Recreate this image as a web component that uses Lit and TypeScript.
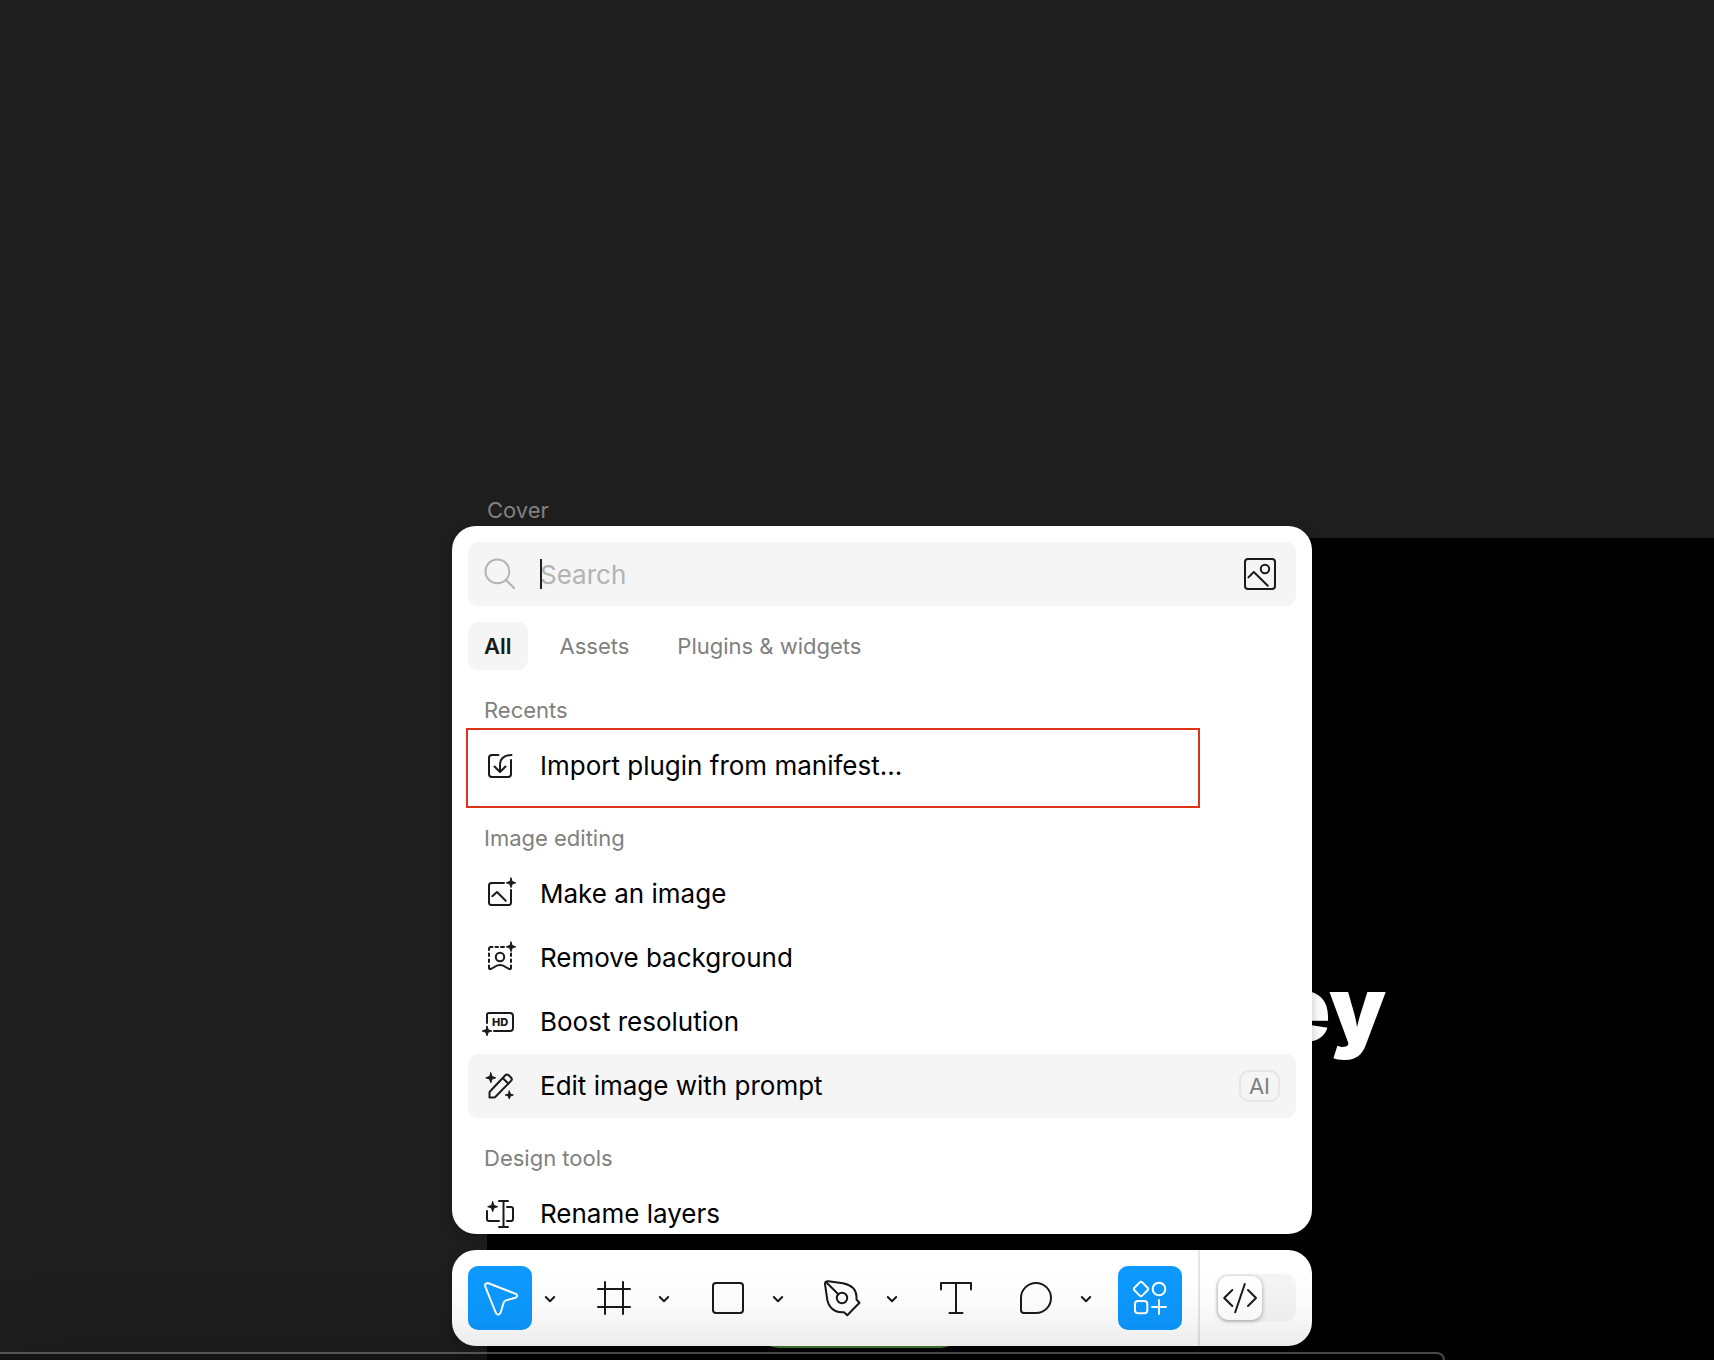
import { LitElement, html, css, svg, nothing, TemplateResult, SVGTemplateResult } from "lit";
import { customElement, property, state } from "lit/decorators.js";
import { classMap } from "lit/directives/class-map.js";

const spark = (x: number, y: number, r: number): SVGTemplateResult => {
  const k = r / 4;
  return svg`<path class="solid" d="M${x} ${y - r}L${x + k} ${y - k}L${x + r} ${y}L${x + k} ${y + k}L${x} ${y + r}L${x - k} ${y + k}L${x - r} ${y}L${x - k} ${y - k}Z"/>`;
};

const icons: Record<string, { size: number; art: SVGTemplateResult }> = {
  search: { size: 32, art: svg`<circle cx="13.4" cy="13.4" r="11.9"/><path d="M22 22L30 30"/>` },
  picture: {
    size: 32,
    art: svg`<rect x="1" y="1" width="30" height="30" rx="3"/><circle cx="21" cy="11" r="4.2"/><path d="M4.4 19.4L9.8 14L23.8 27.8"/>`,
  },
  import: {
    size: 32,
    art: svg`<path d="M14.5 5H8Q5 5 5 8V24Q5 27 8 27H24Q27 27 27 24V10"/><path d="M27.5 5Q16 5.5 16 15V21.5M10.5 16.5L16 22L21.5 16.5"/>`,
  },
  make: {
    size: 32,
    art: svg`<path d="M20 5H7.5Q5 5 5 7.5V24.5Q5 27 7.500 27H24.5Q27 27 27 24.5V12"/><path d="M8.3 18.2L13 14L21.7 22.8"/>${spark(27, 4.8, 4.8)}`,
  },
  remove: {
    size: 32,
    art: svg`<path d="M5 8V7Q5 5 7 5H8.500M11.500 5H14M17 5H20M5 11.500V14M5 17.500V20M27 11.500V14M27 17.500V20"/><path d="M5 23.500V26Q5 27.500 6.500 27Q8 26.500 9.500 25.500Q16 20.500 22.500 25.500Q24 26.500 25.500 27Q27 27.500 27 26V23.500"/><circle cx="16" cy="15" r="4.2"/>${spark(27, 4.8, 4.8)}`,
  },
  boost: {
    size: 32,
    art: svg`<path d="M3 17V9Q3 7 5 7H26Q29 7 29 10V22Q29 25 26 25H10"/><text class="hd" x="16" y="20" text-anchor="middle">HD</text>${spark(3, 25, 4.8)}`,
  },
  edit: {
    size: 32,
    art: svg`<path d="M5.5 27.5V22.8Q5.5 22 6.2 21.3L21.3 5.3Q23 3.7 24.7 5.3L27 7.5Q28.6 9.2 27 10.9L11.5 26.7Q10.7 27.5 9.8 27.5Z"/><path d="M18.8 8.2L24.3 13.5"/>${spark(6.8, 7.8, 5)}${spark(25.3, 25, 4)}`,
  },
  rename: {
    size: 32,
    art: svg`<path d="M15 3H24M15 29H24M19.5 3V29M23 9H27Q29 9 29 11V21Q29 23 27 23H23M15 23H5Q3 23 3 21V13"/>${spark(8.7, 8.7, 5)}`,
  },
  cursor: {
    size: 48,
    art: svg`<path d="M12.4 9.3L39.3 19.6Q43.2 21.5 39.5 23.7L30 26.4Q28 27 27.5 29L24.6 38.7Q22.4 42.4 19.9 39L9.3 12.6Q8.4 8.6 12.4 9.3Z"/>`,
  },
  frame: { size: 48, art: svg`<path d="M15 8V40M33 8V40M8 15H40M8 33H40"/>` },
  rect: { size: 48, art: svg`<rect x="9" y="9" width="30" height="30" rx="3"/>` },
  pen: {
    size: 48,
    art: svg`<path d="M10.3 7.2L25 9.3Q38 12 38.5 22.5V25.5L41.5 28.7L29.3 41.3L26 38.3Q20.5 38.5 17.5 37Q11 34 9.3 26L7 10Q6.8 6.8 10.3 7.2Z"/><circle cx="24" cy="24" r="5.2"/><path d="M8.5 8.5L20.3 20.3"/>`,
  },
  text: { size: 48, art: svg`<path d="M9 15.5V9H39V15.5M24 9V39M17.5 39H30.5"/>` },
  comment: { size: 48, art: svg`<path d="M24 39H12Q9 39 9 36V24A15 15 0 1 1 24 39Z"/>` },
  actions: {
    size: 48,
    art: svg`<path d="M15 7.8Q15.6 7.8 16.2 8.4L21.6 13.8Q22.8 15 21.6 16.2L16.2 21.6Q15 22.8 13.8 21.6L8.4 16.2Q7.2 15 8.4 13.8L13.8 8.4Q14.4 7.8 15 7.8Z"/><circle cx="33" cy="15" r="6.3"/><rect x="9" y="27" width="12.3" height="12.3" rx="3"/><path d="M33 26V40M26 33H40"/>`,
  },
  chevron: { size: 16, art: svg`<path d="M3.8 7L8 11.2L12.2 7"/>` },
  code: { size: 36, art: svg`<path d="M10.3 10L2.2 18L10.3 26M26 10L34 18L26 26M22.8 4L13.2 32.2"/>` },
};

@customElement("line-icon")
export class LineIcon extends LitElement {
  @property() name = "";

  static styles = css`
    :host {
      display: inline-flex;
      flex: none;
    }
    .art {
      display: block;
      overflow: visible;
      fill: none;
      stroke: currentColor;
      stroke-width: 2;
      stroke-linecap: round;
      stroke-linejoin: round;
    }
    .solid {
      fill: currentColor;
      stroke-width: 1;
    }
    .hd {
      fill: currentColor;
      stroke: none;
      font: 800 11px Inter, sans-serif;
    }
  `;

  render() {
    const icon = icons[this.name];
    if (!icon) return nothing;
    return html`<svg class="art" width=${icon.size} height=${icon.size} viewBox="0 0 ${icon.size} ${icon.size}" aria-hidden="true">
      ${icon.art}
    </svg>`;
  }
}

interface Action {
  icon: string;
  label: string;
  badge?: string;
  selected?: boolean;
  marked?: boolean;
}

const sections: { title: string; actions: Action[] }[] = [
  { title: "Recents", actions: [{ icon: "import", label: "Import plugin from manifest...", marked: true }] },
  {
    title: "Image editing",
    actions: [
      { icon: "make", label: "Make an image" },
      { icon: "remove", label: "Remove background" },
      { icon: "boost", label: "Boost resolution" },
      { icon: "edit", label: "Edit image with prompt", badge: "AI", selected: true },
    ],
  },
  { title: "Design tools", actions: [{ icon: "rename", label: "Rename layers" }] },
];

@customElement("actions-panel")
export class ActionsPanel extends LitElement {
  @state() private tab = "All";

  static styles = css`
    :host {
      display: flex;
      flex-direction: column;
      gap: 16px;
      box-sizing: border-box;
      max-height: 708px;
      padding: 16px;
      overflow: hidden;
      border-radius: 24px;
      background: #fff;
      color: #000;
      box-shadow: 0 4px 12px rgba(0, 0, 0, 0.25);
    }
    button,
    input {
      border: 0;
      background: none;
      font: inherit;
      color: inherit;
    }
    .search {
      position: relative;
      display: flex;
      flex: none;
      align-items: center;
      gap: 24px;
      height: 64px;
      padding: 0 20px 0 16px;
      box-sizing: border-box;
      border-radius: 10px;
      background: #f5f5f5;
    }
    .lens {
      color: #b3b3b3;
    }
    .field {
      flex: 1;
      min-width: 0;
      height: 32px;
      padding: 0;
      outline: none;
      font-size: 26px;
    }
    .field::placeholder {
      color: #b3b3b3;
      opacity: 1;
    }
    .caret {
      position: absolute;
      left: 72px;
      top: 17px;
      width: 2px;
      height: 30px;
      background: #1e1e1e;
    }
    .by-image {
      display: flex;
      padding: 0;
      color: #1a1a1a;
    }
    .tabs {
      display: flex;
      flex: none;
      gap: 16px;
    }
    .tab {
      height: 48px;
      padding: 0 16px;
      border-radius: 10px;
      color: #808080;
    }
    .tab.on {
      background: #f5f5f5;
      color: #1a1a1a;
      font-weight: 600;
    }
    .sections {
      display: flex;
      flex-direction: column;
      gap: 16px;
      min-height: 0;
    }
    .section {
      flex: none;
    }
    .heading {
      margin: 0;
      padding-left: 16px;
      font-size: 22px;
      font-weight: 400;
      line-height: 48px;
      color: #808080;
    }
    .list {
      margin: 0;
      padding: 0;
      list-style: none;
    }
    .item {
      position: relative;
    }
    .action {
      display: flex;
      align-items: center;
      gap: 24px;
      width: 100%;
      height: 64px;
      padding: 0 16px;
      border-radius: 10px;
      font-size: 26px;
      text-align: left;
    }
    .action.selected {
      background: #f5f5f5;
    }
    .glyph {
      color: #1a1a1a;
    }
    .label {
      flex: 1;
      padding-bottom: 2px;
    }
    .badge {
      padding: 0 8px;
      border: 2px solid #e6e6e6;
      border-radius: 10px;
      font-size: 22px;
      line-height: 28px;
      color: #808080;
    }
    .marker {
      position: absolute;
      inset: -6px 96px -10px -2px;
      border: 2px solid #dc3419;
      pointer-events: none;
    }
  `;

  private row(a: Action): TemplateResult {
    return html`<li class="item">
      <button class=${classMap({ action: true, selected: !!a.selected })}>
        <line-icon class="glyph" name=${a.icon}></line-icon>
        <span class="label">${a.label}</span>
        ${a.badge ? html`<span class="badge">${a.badge}</span>` : nothing}
      </button>
      ${a.marked ? html`<span class="marker"></span>` : nothing}
    </li>`;
  }

  render() {
    return html`
      <div class="search">
        <line-icon class="lens" name="search"></line-icon>
        <input class="field" type="text" placeholder="Search" aria-label="Search" />
        <span class="caret"></span>
        <button class="by-image" aria-label="Search by image"><line-icon name="picture"></line-icon></button>
      </div>
      <div class="tabs" role="tablist">
        ${["All", "Assets", "Plugins & widgets"].map(
          (t) => html`<button
            class=${classMap({ tab: true, on: t === this.tab })}
            role="tab"
            aria-selected=${t === this.tab}
            @click=${() => (this.tab = t)}
          >${t}</button>`,
        )}
      </div>
      <div class="sections">
        ${sections.map(
          (s) => html`<section class="section">
            <h2 class="heading">${s.title}</h2>
            <ul class="list">${s.actions.map((a) => this.row(a))}</ul>
          </section>`,
        )}
      </div>
    `;
  }
}

const tools = [
  { icon: "cursor", label: "Move", menu: true, active: true },
  { icon: "frame", label: "Frame", menu: true },
  { icon: "rect", label: "Rectangle", menu: true },
  { icon: "pen", label: "Pen", menu: true },
  { icon: "text", label: "Text" },
  { icon: "comment", label: "Comment", menu: true },
  { icon: "actions", label: "Actions", active: true },
];

@customElement("tool-bar")
export class ToolBar extends LitElement {
  @state() private devMode = false;

  static styles = css`
    :host {
      display: flex;
      height: 96px;
      overflow: hidden;
      border-radius: 24px;
      background: #fff;
      color: #1a1a1a;
      box-shadow: 0 4px 12px rgba(0, 0, 0, 0.25);
    }
    button {
      display: flex;
      align-items: center;
      justify-content: center;
      padding: 0;
      border: 0;
      background: none;
      color: inherit;
    }
    .tools {
      display: flex;
      flex: 1;
      align-items: center;
      justify-content: space-between;
      padding: 0 16px;
    }
    .tool {
      display: flex;
      align-items: center;
      gap: 2px;
    }
    .pick {
      width: 64px;
      height: 64px;
      border-radius: 10px;
    }
    .pick.active {
      background: #0d99ff;
      color: #fff;
    }
    .more {
      width: 32px;
      height: 64px;
    }
    .mode {
      display: flex;
      align-items: center;
      padding: 0 16px;
      border-left: 2px solid #e6e6e6;
    }
    .switch {
      justify-content: flex-start;
      width: 80px;
      height: 48px;
      padding: 2px;
      box-sizing: border-box;
      border-radius: 12px;
      background: #f5f5f5;
    }
    .switch.on {
      justify-content: flex-end;
    }
    .knob {
      display: flex;
      align-items: center;
      justify-content: center;
      width: 44px;
      height: 44px;
      border-radius: 10px;
      background: #fff;
      box-shadow: 0 1px 4px rgba(0, 0, 0, 0.35);
    }
  `;

  render() {
    return html`
      <div class="tools">
        ${tools.map(
          (t) => html`<div class="tool">
            <button class=${classMap({ pick: true, active: !!t.active })} aria-label=${t.label}>
              <line-icon name=${t.icon}></line-icon>
            </button>
            ${t.menu
              ? html`<button class="more" aria-label="${t.label} options"><line-icon name="chevron"></line-icon></button>`
              : nothing}
          </div>`,
        )}
      </div>
      <div class="mode">
        <button
          class=${classMap({ switch: true, on: this.devMode })}
          role="switch"
          aria-checked=${this.devMode}
          aria-label="Dev Mode"
          @click=${() => (this.devMode = !this.devMode)}
        >
          <span class="knob"><line-icon name="code"></line-icon></span>
        </button>
      </div>
    `;
  }
}

@customElement("app-root")
export class AppRoot extends LitElement {
  static styles = css`
    :host {
      position: relative;
      display: block;
      min-height: 100vh;
      overflow: hidden;
      background: #1e1e1e;
      font-family: Inter, "Liberation Sans", sans-serif;
      font-size: 22px;
    }
    .frame {
      position: absolute;
      left: 487px;
      right: 0;
      top: 538px;
      bottom: 0;
      background: #000;
    }
    .frame-name {
      position: absolute;
      left: 487px;
      top: 496px;
      line-height: 28px;
      color: #808080;
    }
    .title {
      position: absolute;
      left: 789px;
      top: 421px;
      margin: 0;
      font-size: 90px;
      font-weight: 900;
      line-height: 100px;
      color: #fff;
    }
    .pill {
      position: absolute;
      left: 264px;
      bottom: 12px;
      width: 217px;
      height: 56px;
      border-radius: 28px;
      background: #4f8f37;
    }
    .dock {
      position: absolute;
      left: 50px;
      right: 0;
      bottom: 14px;
      display: flex;
      flex-direction: column;
      gap: 16px;
      width: min(860px, 100% - 32px);
      margin: 0 auto;
    }
    .tray {
      position: absolute;
      left: -16px;
      right: 269px;
      top: calc(100% - 8px);
      height: 160px;
      box-sizing: border-box;
      border: 2px solid rgba(255, 255, 255, 0.28);
      border-radius: 8px;
      background: rgba(0, 0, 0, 0.35);
      box-shadow: 0 0 80px rgba(0, 0, 0, 0.18);
      pointer-events: none;
    }
  `;

  render() {
    return html`
      <span class="frame-name">Cover</span>
      <div class="frame">
        <h1 class="title">ey</h1>
        <span class="pill"></span>
      </div>
      <div class="dock">
        <actions-panel></actions-panel>
        <tool-bar></tool-bar>
      </div>
      <div class="tray"></div>
    `;
  }
}
